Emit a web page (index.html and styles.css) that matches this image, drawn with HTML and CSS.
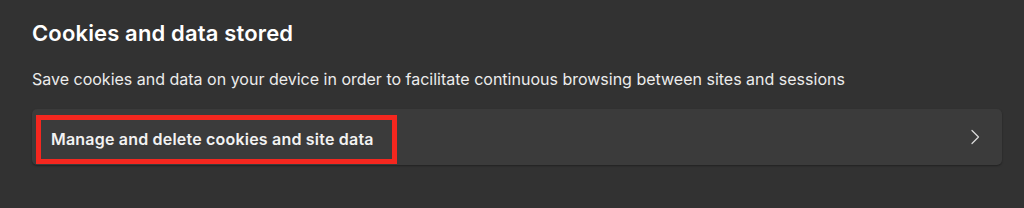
FILE: index.html
```html
<html lang="en">

<head>
  <meta charset="UTF-8">
  <meta name="viewport" content="width=device-width, initial-scale=1.0">
  <title>Cookies</title>
  <link rel="stylesheet" href="styles.css">
</head>

<body>
  <div class="section">
    <h2 class="section-title">Cookies and data stored</h2>
    <p class="section-desc">Save cookies and data on your device in order to facilitate continuous browsing between sites and sessions</p>
    <div class="setting-card">
      <div class="setting-label">Manage and delete cookies and site data</div>
      <svg class="chevron" width="10" height="16" viewBox="0 0 10 16">
        <path d="M2 1.5 L8.5 8 L2 14.5" fill="none" stroke="#d8d8d8" stroke-width="1.3" stroke-linecap="round" stroke-linejoin="round"/>
      </svg>
    </div>
  </div>
</body>

</html>
```

FILE: styles.css
```css
* {
  box-sizing: border-box;
  margin: 0;
  padding: 0;
  font-family: Inter, "Liberation Sans", sans-serif;
}

body {
  background: #323232;
  color: #fff;
  width: 1024px;
  height: 208px;
  overflow: hidden;
}

.section {
  padding: 19px 22px 0 32px;
}

.section-title {
  font-size: 22px;
  font-weight: 600;
  line-height: 28px;
  letter-spacing: 0.15px;
}

.section-desc {
  margin-top: 22px;
  font-size: 16px;
  line-height: 20px;
  color: #ececec;
}

.setting-card {
  display: flex;
  align-items: center;
  margin-top: 20px;
  height: 56px;
  padding-right: 22px;
  background: #3b3b3b;
  border-radius: 5px;
  box-shadow: 0 1px 2px rgba(0, 0, 0, .35);
}

.setting-label {
  margin: 4px 0 0 4px;
  height: 49px;
  padding: 0 18px 0 10px;
  display: flex;
  align-items: center;
  border: 5px solid #f5271f;
  font-size: 16px;
  font-weight: 600;
  letter-spacing: 0.2px;
  color: #f2f2f2;
}

.chevron {
  margin-left: auto;
}
```
